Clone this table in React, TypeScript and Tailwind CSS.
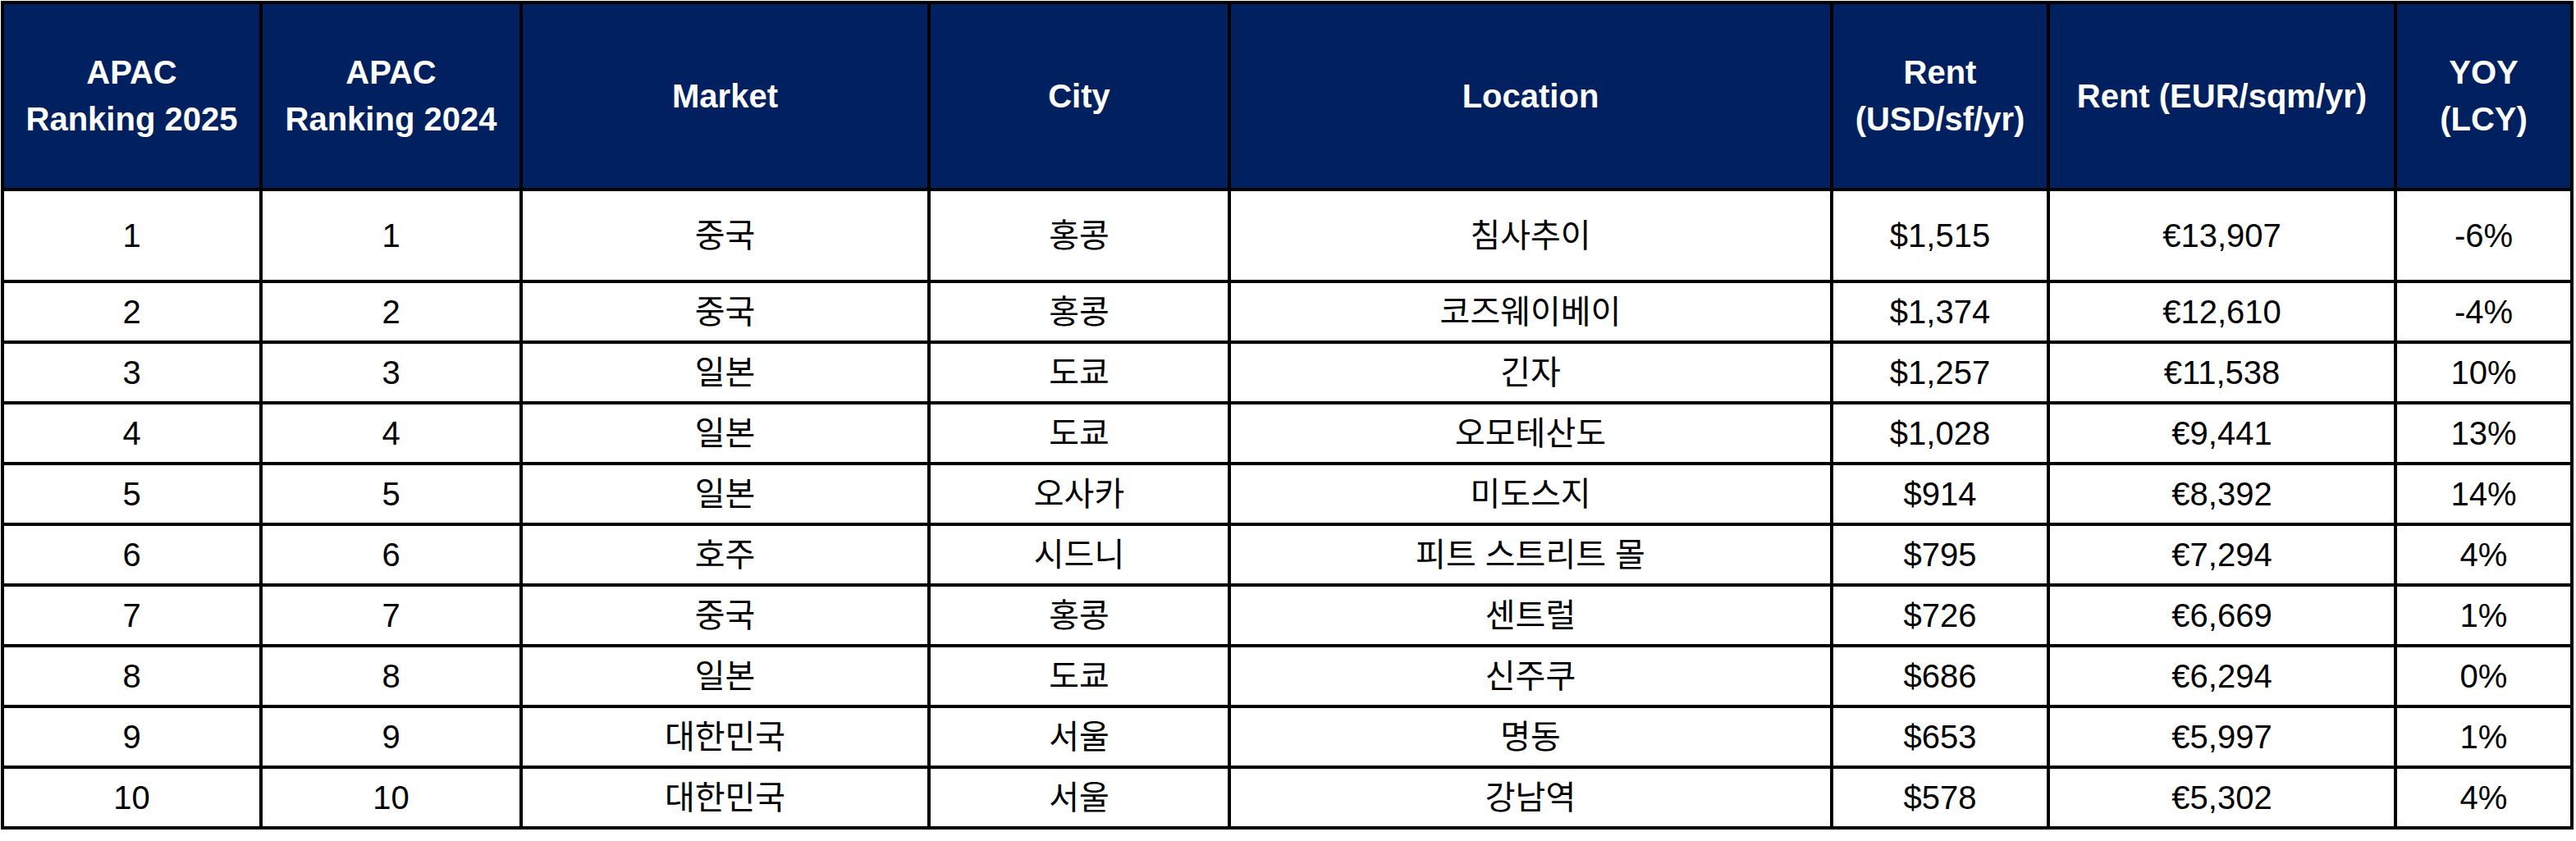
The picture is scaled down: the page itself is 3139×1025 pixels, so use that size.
const headers: string[][] = [
  ['APAC', 'Ranking 2025'],
  ['APAC', 'Ranking 2024'],
  ['Market'],
  ['City'],
  ['Location'],
  ['Rent', '(USD/sf/yr)'],
  ['Rent (EUR/sqm/yr)'],
  ['YOY', '(LCY)'],
];

const rows = [
  ['1', '1', '중국', '홍콩', '침사추이', '$1,515', '€13,907', '-6%'],
  ['2', '2', '중국', '홍콩', '코즈웨이베이', '$1,374', '€12,610', '-4%'],
  ['3', '3', '일본', '도쿄', '긴자', '$1,257', '€11,538', '10%'],
  ['4', '4', '일본', '도쿄', '오모테산도', '$1,028', '€9,441', '13%'],
  ['5', '5', '일본', '오사카', '미도스지', '$914', '€8,392', '14%'],
  ['6', '6', '호주', '시드니', '피트 스트리트 몰', '$795', '€7,294', '4%'],
  ['7', '7', '중국', '홍콩', '센트럴', '$726', '€6,669', '1%'],
  ['8', '8', '일본', '도쿄', '신주쿠', '$686', '€6,294', '0%'],
  ['9', '9', '대한민국', '서울', '명동', '$653', '€5,997', '1%'],
  ['10', '10', '대한민국', '서울', '강남역', '$578', '€5,302', '4%'],
];

export default function App() {
  return (
    <div className="min-h-screen bg-white pt-[1px] pl-[1px] font-['Liberation_Sans','Noto_Sans_CJK_KR',sans-serif]">
      <div className="grid w-max grid-cols-[311px_313px_493px_362px_730px_260px_419px_211px] grid-rows-[224px_108px_repeat(9,70px)] gap-[4px] bg-black p-[4px]">
        {headers.map((lines, i) => (
          <div
            key={'h' + i}
            className="flex flex-col items-center justify-center bg-[#002060] text-center text-[40px] leading-[57px] font-bold text-white"
          >
            {lines.map((line) => (
              <span key={line}>{line}</span>
            ))}
          </div>
        ))}
        {rows.map((row, r) =>
          row.map((cell, c) => (
            <div
              key={r + '-' + c}
              className="flex items-center justify-center bg-white text-[40px] leading-[46px] text-black"
            >
              {cell}
            </div>
          ))
        )}
      </div>
    </div>
  );
}
